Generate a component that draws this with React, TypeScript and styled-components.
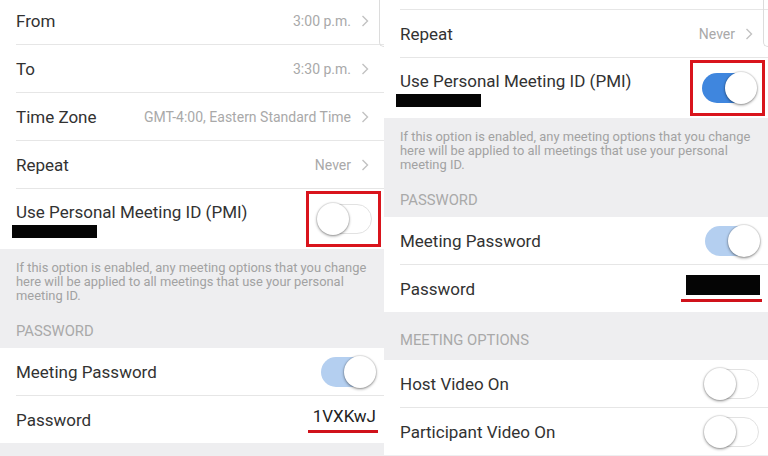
import React from "react";
import styled, {createGlobalStyle} from "styled-components";

const GlobalStyle = createGlobalStyle`
  html, body {
    margin: 0;
    padding: 0;
    background: #eeeef0;
    font-family: Roboto, "Noto Sans", "Liberation Sans", sans-serif;
  }
`

type Props = {
	offset: number
	pmiOn: boolean
	redactPassword: boolean
}

const Chevron = () => (
	<ChevronSvg width="8" height="12" viewBox="0 0 8 12">
		<polyline points="1.5,1 6.5,6 1.5,11" fill="none" stroke="#c2c2c2" strokeWidth="1.4"/>
	</ChevronSvg>
)

const Toggle = ({on, tone}: { on: boolean, tone?: 'strong' | 'soft' }) => (
	<Track $on={on} $tone={tone}>
		<Knob $on={on}/>
	</Track>
)

const Settings = ({offset, pmiOn, redactPassword}: Props) => {
	return (
		<Panel>
			<Content $offset={offset}>
				<Group>
					<Row><Label>From</Label><Value>3:00 p.m.<Chevron/></Value></Row>
					<Row><Label>To</Label><Value>3:30 p.m.<Chevron/></Value></Row>
					<Row><Label>Time Zone</Label><Value>GMT-4:00, Eastern Standard Time<Chevron/></Value></Row>
					<Row><Label>Repeat</Label><Value>Never<Chevron/></Value></Row>
					<PmiRow>
						<PmiText>
							<Label>Use Personal Meeting ID (PMI)</Label>
							<Redaction/>
						</PmiText>
						<Highlight>
							<Toggle on={pmiOn} tone="strong"/>
						</Highlight>
					</PmiRow>
				</Group>
				<Info>
					If this option is enabled, any meeting options that you change<br/>
					here will be applied to all meetings that use your personal<br/>
					meeting ID.
				</Info>
				<SectionHeader>PASSWORD</SectionHeader>
				<Group>
					<Row><Label>Meeting Password</Label><Toggle on tone="soft"/></Row>
					<Row>
						<Label>Password</Label>
						<Marked>{redactPassword ? <PasswordBlock/> : '1VXKwJ'}</Marked>
					</Row>
				</Group>
				<SectionHeader $tall>MEETING OPTIONS</SectionHeader>
				<Group>
					<Row><Label>Host Video On</Label><Toggle on={false}/></Row>
					<Row><Label>Participant Video On</Label><Toggle on={false}/></Row>
				</Group>
			</Content>
			<ScrollEdge/>
		</Panel>
	)
}

const App = () => {
	return (
		<>
			<GlobalStyle/>
			<Screen>
				<Settings offset={-3} pmiOn={false} redactPassword={false}/>
				<Settings offset={-134} pmiOn redactPassword/>
			</Screen>
		</>
	)
}

export default App


const Screen = styled.div`
  width: 768px;
  height: 456px;
  display: flex;
  overflow: hidden;
`

const Panel = styled.div`
  position: relative;
  width: 384px;
  height: 456px;
  overflow: hidden;
  background: #eeeef0;
`

const Content = styled.div<{ $offset: number }>`
  margin-top: ${({$offset}) => $offset}px;
  display: flex;
  flex-direction: column;
`

const Group = styled.div`
  background: #ffffff;
  display: flex;
  flex-direction: column;
`

const Row = styled.div`
  height: 47px;
  margin-left: 16px;
  padding-right: 15px;
  display: flex;
  align-items: center;
  justify-content: space-between;
  border-bottom: 1px solid #e6e6e6;

  &:last-child {
    border-bottom: none;
  }

  & > div:last-child {
    margin-right: -6px;
  }
`

const PmiRow = styled.div`
  height: 60px;
  margin-left: 16px;
  padding-right: 3px;
  display: flex;
  align-items: center;
  justify-content: space-between;
`

const PmiText = styled.div`
  display: flex;
  flex-direction: column;
  padding-top: 1px;
`

const Label = styled.span`
  font-size: 17px;
  line-height: 20px;
  color: #323232;
`

const Value = styled.span`
  display: flex;
  align-items: center;
  gap: 10px;
  font-size: 14px;
  color: #a9a9a9;
`

const ChevronSvg = styled.svg`
  display: block;
  margin-top: 1px;
`

const Redaction = styled.div`
  width: 85px;
  height: 13px;
  margin: 3px 0 0 -4px;
  background: #050505;
`

const Highlight = styled.div`
  width: 75px;
  height: 56px;
  box-sizing: border-box;
  border: 3px solid #d9141c;
  display: flex;
  align-items: center;
  padding-left: 9px;
`

const Track = styled.div<{ $on: boolean, $tone?: 'strong' | 'soft' }>`
  position: relative;
  width: 54px;
  height: 30px;
  box-sizing: border-box;
  border-radius: 15px;
  border: 1px solid ${({$on}) => $on ? 'transparent' : '#e2e2e2'};
  background: ${({$on, $tone}) => !$on ? '#ffffff' : $tone === 'soft' ? '#b4cff0' : '#3f86de'};
`

const Knob = styled.div<{ $on: boolean }>`
  position: absolute;
  top: -2px;
  left: ${({$on}) => $on ? '22px' : '-2px'};
  width: 32px;
  height: 32px;
  border-radius: 50%;
  background: #ffffff;
  box-shadow: 0 1px 3px rgba(0, 0, 0, 0.45), 0 0 0 1px rgba(0, 0, 0, 0.06);
`

const Info = styled.p`
  margin: 0;
  padding: 12px 12px 0 16px;
  font-size: 12.9px;
  line-height: 14px;
  color: #a2a2a2;
  white-space: nowrap;
`

const SectionHeader = styled.div<{ $tall?: boolean }>`
  padding: 20px 16px ${({$tall}) => $tall ? '12px' : '9px'};
  font-size: 14.8px;
  line-height: 16px;
  color: #a9a9a9;
`

const Marked = styled.span`
  display: inline-flex;
  align-items: center;
  padding: 0 2px 4px 5px;
  margin-right: -9px;
  border-bottom: 3px solid #d0121b;
  font-size: 17px;
  line-height: 20px;
  color: #222222;
`

const PasswordBlock = styled.span`
  display: block;
  width: 74px;
  height: 20px;
  background: #050505;
`

const ScrollEdge = styled.div`
  position: absolute;
  top: 0;
  right: 0;
  width: 4px;
  height: 46px;
  border-left: 1px solid #dcdcdc;
  border-bottom: 1px solid #dcdcdc;
  border-bottom-left-radius: 6px;
`
